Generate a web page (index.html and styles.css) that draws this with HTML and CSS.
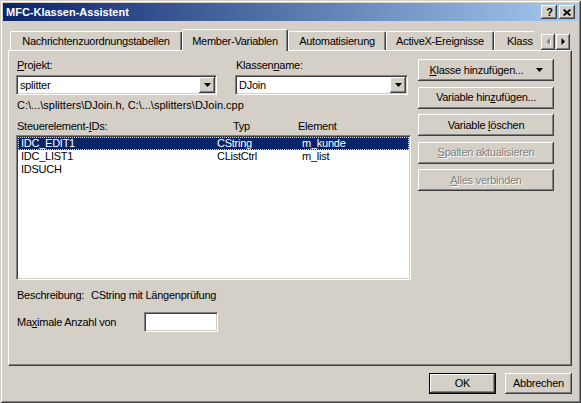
FILE: index.html
```html
<!DOCTYPE html>
<html>
<head>
<meta charset="utf-8">
<title>MFC-Klassen-Assistent</title>
<link rel="stylesheet" href="styles.css">
</head>
<body>
<div class="window">
  <div class="titlebar">
    <span class="title">MFC-Klassen-Assistent</span>
    <div class="capbtns">
      <span class="capbtn help">?</span>
      <span class="capbtn close"><svg width="8" height="7" viewBox="0 0 8 7"><path d="M0.6 0.5L7.4 6.5M7.4 0.5L0.6 6.5" stroke="#000" stroke-width="1.7"/></svg></span>
    </div>
  </div>

  <div class="tabrow">
    <div class="tabs">
      <div class="tab w1">Nachrichtenzuordnungstabellen</div>
      <div class="tab sel w2">Member-Variablen</div>
      <div class="tab w3">Automatisierung</div>
      <div class="tab w4">ActiveX-Ereignisse</div>
      <div class="tab w5">Klass</div>
    </div>
    <div class="tabscroll">
      <span class="sbtn"><svg width="5" height="8" viewBox="0 0 5 8"><polygon points="5,1 5,8 1.5,4.5" fill="#fff"/><polygon points="4,0 4,7 0.5,3.5" fill="#808080"/></svg></span>
      <span class="sbtn"><svg width="5" height="8" viewBox="0 0 5 8"><polygon points="0.5,0 0.5,7 4,3.5" fill="#000"/></svg></span>
    </div>
  </div>

  <div class="panel">
    <div class="leftcol">
      <div class="toprow">
        <div class="field f1">
          <div class="lbl"><u>P</u>rojekt:</div>
          <div class="combo sunken">
            <span class="cval">splitter</span>
            <span class="cbtn"><svg width="7" height="4" viewBox="0 0 7 4"><polygon points="0,0 7,0 3.5,4" fill="#000"/></svg></span>
          </div>
        </div>
        <div class="field f2">
          <div class="lbl">Klassen<u>n</u>ame:</div>
          <div class="combo sunken">
            <span class="cval">DJoin</span>
            <span class="cbtn"><svg width="7" height="4" viewBox="0 0 7 4"><polygon points="0,0 7,0 3.5,4" fill="#000"/></svg></span>
          </div>
        </div>
      </div>
      <div class="path">C:\...\splitters\DJoin.h, C:\...\splitters\DJoin.cpp</div>
      <div class="lhead"><span>Steuerelement-<u>I</u>Ds:</span><span>Typ</span><span>Element</span></div>
      <div class="list sunken">
        <div class="row sel"><span>IDC_EDIT1</span><span>CString</span><span>m_kunde</span></div>
        <div class="row"><span>IDC_LIST1</span><span>CListCtrl</span><span>m_list</span></div>
        <div class="row"><span>IDSUCH</span><span></span><span></span></div>
      </div>
      <div class="desc"><span class="dlbl">Beschreibung:</span><span>CString mit Längenprüfung</span></div>
      <div class="maxrow"><span class="mlbl">Ma<u>x</u>imale Anzahl von</span><span class="edit sunken"></span></div>
    </div>
    <div class="rightcol">
      <div class="btn split"><span><u>K</u>lasse hinzufügen...</span><svg width="7" height="4" viewBox="0 0 7 4"><polygon points="0,0 7,0 3.5,4" fill="#000"/></svg></div>
      <div class="btn"><span>Variable hin<u>z</u>ufügen...</span></div>
      <div class="btn"><span>Variable <u>l</u>öschen</span></div>
      <div class="btn disabled"><span><u>S</u>palten aktualisieren</span></div>
      <div class="btn disabled"><span><u>A</u>lles verbinden</span></div>
    </div>
  </div>

  <div class="footer">
    <div class="btn fbtn def"><span>OK</span></div>
    <div class="btn fbtn"><span>Abbrechen</span></div>
  </div>
</div>
</body>
</html>
```

FILE: styles.css
```css
* { box-sizing: border-box; margin: 0; padding: 0; }
html, body { width: 581px; height: 403px; overflow: hidden; }
body {
  background: #d4d0c8;
  font-family: "Liberation Sans", Arial, sans-serif;
  font-size: 11px;
  letter-spacing: -0.25px;
  color: #000;
}
u { text-underline-offset: 1px; }

.window {
  width: 581px;
  height: 403px;
  padding: 3px;
  display: flex;
  flex-direction: column;
  background: #d4d0c8;
  box-shadow: inset 1px 1px #d4d0c8, inset -1px -1px #404040, inset 2px 2px #fff, inset -2px -2px #808080;
}

/* title bar */
.titlebar {
  height: 18px;
  flex: none;
  display: flex;
  align-items: center;
  padding: 0 3px 0 3px;
  background: linear-gradient(to right, #0a246a, #a6caf0);
}
.title {
  color: #fff;
  font-weight: bold;
  letter-spacing: 0;
  line-height: 13px;
}
.capbtns { margin-left: auto; display: flex; gap: 2px; }
.capbtn {
  width: 16px;
  height: 14px;
  display: flex;
  align-items: center;
  justify-content: center;
  background: #d4d0c8;
  box-shadow: inset -1px -1px #404040, inset 1px 1px #fff, inset -2px -2px #808080;
  font-weight: bold;
  font-size: 11px;
  letter-spacing: 0;
  line-height: 11px;
}
.capbtn.help { padding-left: 1px; }

/* tabs */
.tabrow {
  margin-top: 8px;
  margin-bottom: -1px;
  height: 22px;
  flex: none;
  display: flex;
  padding-left: 7px;
  position: relative;
  z-index: 1;
}
.tabs {
  width: 524px;
  height: 22px;
  display: flex;
  align-items: flex-end;
  overflow: hidden;
}
.tab {
  flex: none;
  height: 19px;
  margin-bottom: 1px;
  border-top: 1px solid #fff;
  border-left: 1px solid #fff;
  border-right: 1px solid #404040;
  border-radius: 2px 2px 0 0;
  box-shadow: inset -1px 0 #808080;
  padding-top: 3px;
  line-height: 13px;
  text-align: center;
  white-space: nowrap;
}
.tab.sel {
  height: 22px;
  margin-bottom: 0;
  padding-top: 5px;
  background: #d4d0c8;
  position: relative;
  z-index: 2;
}
.w1 { width: 172px; }
.w2 { width: 106px; }
.w3 { width: 98px; }
.w4 { width: 108px; }
.w5 { width: 100px; text-align: left; padding-left: 12px; border-right: none; box-shadow: none; }

.tabscroll {
  margin-left: 7px;
  margin-top: 5px;
  display: flex;
  gap: 1px;
  height: 16px;
}
.sbtn {
  width: 14px;
  height: 16px;
  display: flex;
  align-items: center;
  justify-content: center;
  background: #d4d0c8;
  box-shadow: inset -1px -1px #404040, inset 1px 1px #fff, inset -2px -2px #808080;
}

/* panel */
.panel {
  flex: none;
  height: 316px;
  margin: 0 6px 0 5px;
  border-top: 1px solid #fff;
  border-left: 1px solid #fff;
  border-right: 1px solid #404040;
  border-bottom: 1px solid #404040;
  box-shadow: inset -1px -1px #808080;
  padding: 8px 0 0 7px;
  display: flex;
  gap: 7px;
}
.leftcol { width: 395px; display: flex; flex-direction: column; }
.toprow { display: flex; }
.f1 { width: 201px; }
.f2 { width: 173px; margin-left: 18px; }
.lbl { line-height: 13px; padding-left: 1px; margin-bottom: 3px; }

.sunken {
  background: #fff;
  border-top: 1px solid #808080;
  border-left: 1px solid #808080;
  border-right: 1px solid #fff;
  border-bottom: 1px solid #fff;
  box-shadow: inset 1px 1px #404040, inset -1px -1px #d4d0c8;
}
.combo {
  height: 20px;
  padding: 1px;
  display: flex;
  align-items: center;
}
.cval { padding-left: 2px; line-height: 13px; }
.cbtn {
  margin-left: auto;
  width: 16px;
  height: 16px;
  display: flex;
  align-items: center;
  justify-content: center;
  background: #d4d0c8;
  box-shadow: inset -1px -1px #404040, inset 1px 1px #fff, inset -2px -2px #808080;
}

.path { margin-top: 4px; line-height: 13px; padding-left: 1px; letter-spacing: 0; }
.lhead {
  margin-top: 8px;
  line-height: 13px;
  display: grid;
  grid-template-columns: 216px 65px 1fr;
  padding-left: 1px;
}
.list {
  margin-top: 2px;
  height: 145px;
  padding: 1px;
}
.row {
  height: 13px;
  line-height: 11px;
  display: grid;
  grid-template-columns: 196px 85px 1fr;
  padding-left: 2px;
  border: 1px solid transparent;
  white-space: nowrap;
}
.row.sel {
  background: #0a246a;
  color: #fff;
  border: 1px dotted #f5db95;
}

.desc { margin-top: 9px; line-height: 13px; display: flex; }
.dlbl { width: 75px; padding-left: 1px; }
.maxrow { margin-top: 10px; display: flex; align-items: center; }
.mlbl { width: 128px; padding-left: 1px; line-height: 13px; }
.edit { width: 74px; height: 20px; }

.rightcol { width: 136px; display: flex; flex-direction: column; gap: 5.5px; }

.btn {
  height: 22px;
  display: flex;
  align-items: center;
  justify-content: center;
  background: #d4d0c8;
  box-shadow: inset -1px -1px #404040, inset 1px 1px #fff, inset -2px -2px #808080;
  line-height: 13px;
  white-space: nowrap;
}
.btn.split { gap: 12px; }
.btn.disabled { color: #808080; text-shadow: 1px 1px 0 #fff; }

/* footer */
.footer {
  margin-top: 7px;
  display: flex;
  justify-content: flex-end;
  gap: 9px;
  padding-right: 6px;
}
.fbtn { width: 67px; height: 21px; }
.fbtn.def { border: 1px solid #000; }
```
